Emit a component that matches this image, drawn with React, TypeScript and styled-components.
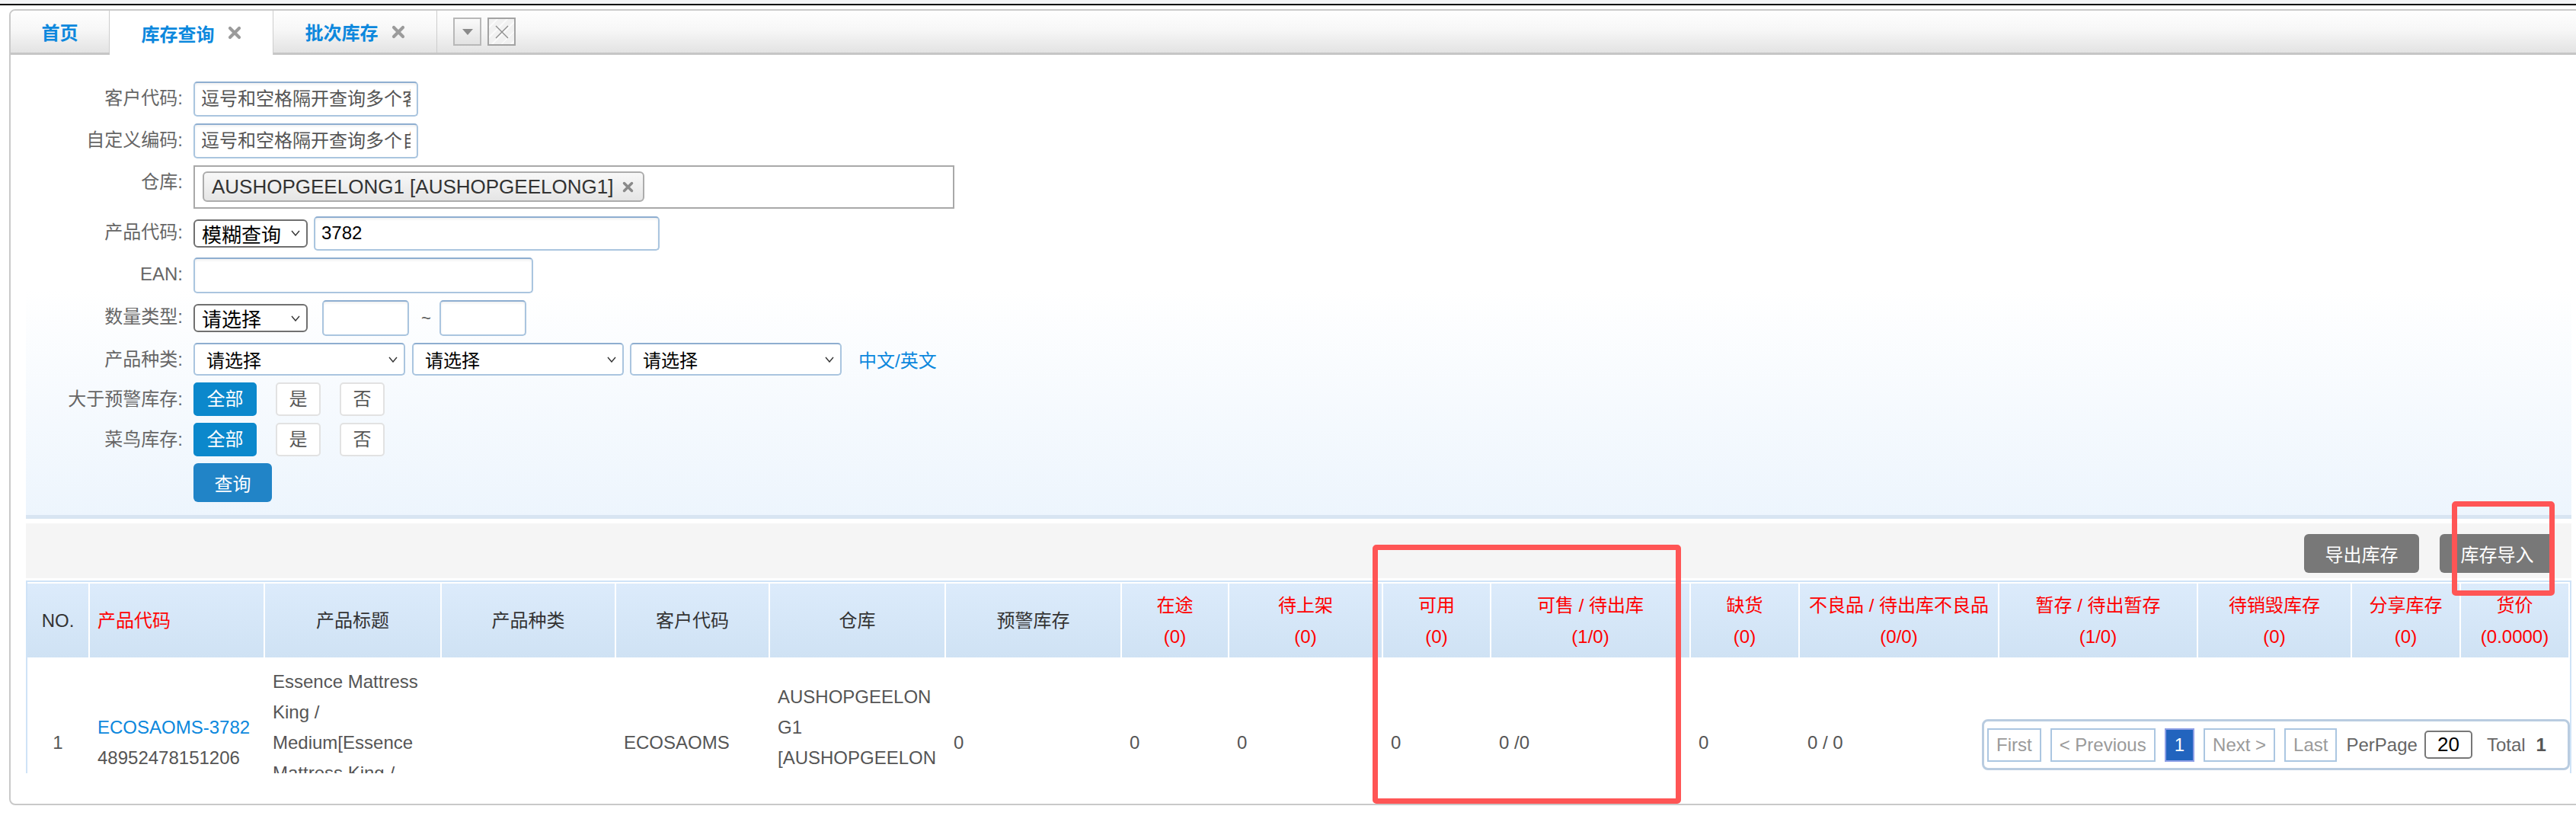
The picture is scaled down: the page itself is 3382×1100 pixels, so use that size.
import React from "react";
import styled, { createGlobalStyle, css } from "styled-components";

const FONT = `"Liberation Sans", Arial, "Noto Sans CJK SC", sans-serif`;

const Global = createGlobalStyle`
  html, body { margin: 0; padding: 0; background: #fff; overflow: hidden; }
  body { font-family: ${FONT}; font-size: 24px; color: #555; }
  * { box-sizing: border-box; }
`;

const Root = styled.div`
  position: relative;
  width: 3382px;
  height: 1100px;
  overflow: hidden;
  background: #fff;
`;

const TopStrip = styled.div`
  height: 7px;
  background: #f3f4f6;
  border-bottom: 2px solid #000;
`;

const Panel = styled.div`
  margin: 5px 0 0 12px;
  width: 3386px;
  height: 1045px;
  border: 2px solid #c9c9c9;
  border-radius: 8px;
  overflow: hidden;
  background: #fff;
`;

const TabBar = styled.div`
  display: flex;
  align-items: stretch;
  height: 58px;
  border-bottom: 3px solid #c6c6c6;
  background: linear-gradient(#fefefe 0%, #f7f7f7 45%, #e3e3e3 100%);
`;

const Tab = styled.div<{ $w: number; $active?: boolean }>`
  position: relative;
  display: flex;
  align-items: center;
  justify-content: center;
  gap: 17px;
  width: ${(p) => p.$w}px;
  border-right: 1px solid #cdcdcd;
  font-size: 24px;
  font-weight: bold;
  color: #0c88dd;
  ${(p) =>
    p.$active &&
    css`
      background: #fff;
      margin-bottom: -3px;
    `}
`;

const TabTools = styled.div`
  display: flex;
  align-items: center;
  gap: 8px;
  margin-left: 21px;
`;

const ToolButton = styled.div<{ $striped?: boolean }>`
  width: 37px;
  height: 37px;
  display: flex;
  align-items: center;
  justify-content: center;
  border: 2px solid #b8b8b8;
  background: ${(p) =>
    p.$striped
      ? "repeating-linear-gradient(135deg, #f1f1f1 0 7px, #fafafa 7px 9px)"
      : "linear-gradient(#fafafa, #e2e2e2)"};
  ${(p) => p.$striped && "border-color: #a3a3a3;"}
`;

const Content = styled.div`
  padding: 14px 20px 0;
`;

const SearchPanel = styled.div`
  display: flex;
  flex-direction: column;
  gap: 9px;
  padding: 21px 0 17px;
  background: linear-gradient(#ffffff 0%, #ffffff 50%, #edf5fd 100%);
  border-bottom: 5px solid #d8e5f2;
`;

const FormRow = styled.div<{ $h: number }>`
  display: flex;
  align-items: flex-start;
  height: ${(p) => p.$h}px;
`;

const Label = styled.div`
  width: 206px;
  margin-right: 14px;
  flex: none;
  height: 44px;
  line-height: 44px;
  text-align: right;
  font-size: 24px;
  color: #666;
  white-space: nowrap;
`;

const Fields = styled.div`
  display: flex;
  align-items: center;
  height: 100%;
`;

const TextInput = styled.input<{ $w: number; $h: number; $ml?: number }>`
  width: ${(p) => p.$w}px;
  height: ${(p) => p.$h}px;
  margin-left: ${(p) => p.$ml ?? 0}px;
  border: 2px solid #aac5df;
  border-top-color: #8eaed0;
  border-radius: 5px;
  box-shadow: inset 0 2px 3px rgba(0, 0, 0, 0.06);
  padding: 0 8px;
  font: 24px ${FONT};
  color: #000;
  background: #fff;
  outline: none;
  &::placeholder {
    color: #555;
    opacity: 1;
  }
`;

const SelectBox = styled.div<{ $w: number; $h: number; $styled?: boolean; $ml?: number }>`
  display: flex;
  align-items: center;
  justify-content: space-between;
  width: ${(p) => p.$w}px;
  height: ${(p) => p.$h}px;
  margin-left: ${(p) => p.$ml ?? 0}px;
  background: #fff;
  color: #000;
  ${(p) =>
    p.$styled
      ? css`
          border: 2px solid #aac5df;
          border-top-color: #8eaed0;
          border-radius: 5px;
          padding: 0 8px 0 15px;
          font-size: 24px;
        `
      : css`
          border: 2px solid #707070;
          border-radius: 6px;
          padding: 0 8px 0 9px;
          font-size: 26px;
        `}
`;

const Tilde = styled.span`
  margin: 0 11px 0 16px;
  font-size: 22px;
  color: #555;
`;

const LinkText = styled.a`
  margin-left: 22px;
  font-size: 24px;
  color: #0c88dd;
  text-decoration: none;
`;

const TagBox = styled.div<{ $w: number; $h: number }>`
  width: ${(p) => p.$w}px;
  height: ${(p) => p.$h}px;
  border: 2px solid #a9a9a9;
  padding: 6px 10px;
  background: #fff;
`;

const Tag = styled.span`
  display: inline-flex;
  align-items: center;
  gap: 12px;
  height: 40px;
  padding: 0 12px 0 10px;
  border: 2px solid #acacac;
  border-radius: 6px;
  background: linear-gradient(#f8f8f8, #e5e5e5);
  font-size: 26px;
  color: #333;
  white-space: nowrap;
`;

const ToggleGroup = styled.div`
  display: flex;
  gap: 25px;
`;

const Toggle = styled.div<{ $active?: boolean; $w: number }>`
  width: ${(p) => p.$w}px;
  height: 44px;
  line-height: 40px;
  text-align: center;
  font-size: 24px;
  border-radius: 5px;
  border: 2px solid ${(p) => (p.$active ? "#0b88cc" : "#e2e2e2")};
  background: ${(p) => (p.$active ? "#0b88cc" : "#fff")};
  color: ${(p) => (p.$active ? "#fff" : "#555")};
`;

const QueryButton = styled.button`
  width: 103px;
  height: 51px;
  border: none;
  border-radius: 6px;
  background: #2184c7;
  color: #fff;
  font: 24px ${FONT};
  padding: 0;
`;

const Toolbar = styled.div`
  display: flex;
  justify-content: flex-end;
  align-items: flex-start;
  gap: 27px;
  height: 72px;
  margin-top: 6px;
  padding: 14px 22px 0 0;
  background: #f5f5f5;
`;

const GrayButton = styled.button`
  width: 151px;
  height: 51px;
  border: none;
  border-radius: 6px;
  background: #787878;
  color: #fff;
  font: 24px ${FONT};
  padding: 0;
`;

const TableWrap = styled.div`
  position: relative;
  margin-top: 3px;
  height: 253px;
  border: 2px solid #cfe3f7;
  border-bottom: none;
  overflow: hidden;
`;

const Table = styled.table`
  width: 3336px;
  table-layout: fixed;
  border-collapse: separate;
  border-spacing: 0;
`;

const Th = styled.th<{ $w: number; $red?: boolean; $left?: boolean; $first?: boolean }>`
  width: ${(p) => p.$w}px;
  height: 99px;
  padding: 0 ${(p) => (p.$left ? "0 0 10px" : "4px")};
  border-top: 2px solid #fff;
  border-left: ${(p) => (p.$first ? "none" : "2px solid #fff")};
  background: linear-gradient(#dcebfb, #cfe2f4);
  font-size: 24px;
  font-weight: normal;
  line-height: 41px;
  white-space: nowrap;
  text-align: ${(p) => (p.$left ? "left" : "center")};
  color: ${(p) => (p.$red ? "#ff0000" : "#333")};
  vertical-align: middle;
`;

const Td = styled.td<{ $center?: boolean; $first?: boolean }>`
  padding: 12px 10px;
  border-left: ${(p) => (p.$first ? "none" : "2px solid transparent")};
  line-height: 40px;
  font-size: 24px;
  color: #555;
  vertical-align: middle;
  text-align: ${(p) => (p.$center ? "center" : "left")};
  overflow-wrap: break-word;
  word-wrap: break-word;
`;

const CodeLink = styled.a`
  display: block;
  color: #0c88dd;
  text-decoration: none;
`;

const Pager = styled.div`
  position: absolute;
  right: 0;
  bottom: 4px;
  display: flex;
  align-items: center;
  gap: 12px;
  width: 772px;
  height: 67px;
  padding: 0 4px;
  border: 3px solid #b9cce0;
  border-radius: 8px;
  background: #fff;
`;

const PageBtn = styled.span<{ $active?: boolean }>`
  height: 44px;
  line-height: 40px;
  padding: 0 ${(p) => (p.$active ? "11px" : "10px")};
  border: 2px solid ${(p) => (p.$active ? "#8d9fe6" : "#abc6e1")};
  background: ${(p) => (p.$active ? "#2264be" : "#fff")};
  color: ${(p) => (p.$active ? "#fff" : "#9a9a9a")};
  font-size: 24px;
  white-space: nowrap;
`;

const PagerText = styled.span<{ $ml?: number }>`
  margin-left: ${(p) => p.$ml ?? 0}px;
  font-size: 24px;
  color: #666;
  white-space: nowrap;
`;

const PerPageInput = styled.input`
  width: 63px;
  height: 37px;
  margin-left: -3px;
  border: 2px solid #777;
  border-radius: 5px;
  text-align: center;
  font: 26px ${FONT};
  color: #000;
  padding: 0;
  outline: none;
`;

const TotalNum = styled.b`
  margin-left: 14px;
  color: #555;
`;

const Annotation = styled.div<{ $x: number; $y: number; $w: number; $h: number }>`
  position: absolute;
  left: ${(p) => p.$x}px;
  top: ${(p) => p.$y}px;
  width: ${(p) => p.$w}px;
  height: ${(p) => p.$h}px;
  border: 7px solid #ff5555;
  border-radius: 5px;
  pointer-events: none;
`;

const CloseMark = ({ size = 18, color = "#9b9b9b" }: { size?: number; color?: string }) => (
  <svg width={size} height={size} viewBox="0 0 18 18">
    <path d="M3 3 L15 15 M15 3 L3 15" stroke={color} strokeWidth="4.2" strokeLinecap="round" />
  </svg>
);

const Chevron = () => (
  <svg width="12" height="8" viewBox="0 0 12 8">
    <polyline points="1,1 6,7 11,1" fill="none" stroke="#333" strokeWidth="1.4" />
  </svg>
);

const columns: { w: number; label: string; sub?: string; red?: boolean; left?: boolean }[] = [
  { w: 80, label: "NO." },
  { w: 230, label: "产品代码", red: true, left: true },
  { w: 232, label: "产品标题" },
  { w: 229, label: "产品种类" },
  { w: 202, label: "客户代码" },
  { w: 231, label: "仓库" },
  { w: 231, label: "预警库存" },
  { w: 141, label: "在途", sub: "(0)", red: true },
  { w: 202, label: "待上架", sub: "(0)", red: true },
  { w: 142, label: "可用", sub: "(0)", red: true },
  { w: 262, label: "可售 / 待出库", sub: "(1/0)", red: true },
  { w: 143, label: "缺货", sub: "(0)", red: true },
  { w: 262, label: "不良品 / 待出库不良品", sub: "(0/0)", red: true },
  { w: 261, label: "暂存 / 待出暂存", sub: "(1/0)", red: true },
  { w: 202, label: "待销毁库存", sub: "(0)", red: true },
  { w: 143, label: "分享库存", sub: "(0)", red: true },
  { w: 143, label: "货价", sub: "(0.0000)", red: true },
];

/* values of the stock columns; the last four lie under the pager and are left blank */
const rowValues = ["0", "0", "0", "0", "0 /0", "0", "0 / 0", "", "", "", ""];

export default function App() {
  return (
    <Root>
      <Global />
      <TopStrip />
      <Panel>
        <TabBar>
          <Tab $w={130}>首页</Tab>
          <Tab $w={215} $active>
            库存查询
            <CloseMark />
          </Tab>
          <Tab $w={215}>
            批次库存
            <CloseMark />
          </Tab>
          <TabTools>
            <ToolButton>
              <svg width="14" height="8" viewBox="0 0 14 8">
                <polygon points="0,0 14,0 7,8" fill="#8a8a8a" />
              </svg>
            </ToolButton>
            <ToolButton $striped>
              <svg width="20" height="20" viewBox="0 0 20 20">
                <path d="M2 2 L18 18 M18 2 L2 18" stroke="#8c8c8c" strokeWidth="1.3" />
              </svg>
            </ToolButton>
          </TabTools>
        </TabBar>

        <Content>
          <SearchPanel>
            <FormRow $h={46}>
              <Label>客户代码:</Label>
              <Fields>
                <TextInput $w={295} $h={46} placeholder="逗号和空格隔开查询多个客户代码" />
              </Fields>
            </FormRow>
            <FormRow $h={46}>
              <Label>自定义编码:</Label>
              <Fields>
                <TextInput $w={295} $h={46} placeholder="逗号和空格隔开查询多个自定义编码" />
              </Fields>
            </FormRow>
            <FormRow $h={57}>
              <Label>仓库:</Label>
              <TagBox $w={999} $h={57}>
                <Tag>
                  AUSHOPGEELONG1 [AUSHOPGEELONG1]
                  <CloseMark size={15} color="#8a8a8a" />
                </Tag>
              </TagBox>
            </FormRow>
            <FormRow $h={46}>
              <Label>产品代码:</Label>
              <Fields>
                <SelectBox $w={150} $h={37}>
                  模糊查询
                  <Chevron />
                </SelectBox>
                <TextInput $w={454} $h={45} $ml={8} defaultValue="3782" />
              </Fields>
            </FormRow>
            <FormRow $h={47}>
              <Label>EAN:</Label>
              <Fields>
                <TextInput $w={446} $h={47} />
              </Fields>
            </FormRow>
            <FormRow $h={47}>
              <Label>数量类型:</Label>
              <Fields>
                <SelectBox $w={150} $h={37}>
                  请选择
                  <Chevron />
                </SelectBox>
                <TextInput $w={114} $h={47} $ml={19} />
                <Tilde>~</Tilde>
                <TextInput $w={114} $h={47} />
              </Fields>
            </FormRow>
            <FormRow $h={43}>
              <Label>产品种类:</Label>
              <Fields>
                <SelectBox $styled $w={278} $h={43}>
                  请选择
                  <Chevron />
                </SelectBox>
                <SelectBox $styled $w={278} $h={43} $ml={9}>
                  请选择
                  <Chevron />
                </SelectBox>
                <SelectBox $styled $w={278} $h={43} $ml={8}>
                  请选择
                  <Chevron />
                </SelectBox>
                <LinkText>中文/英文</LinkText>
              </Fields>
            </FormRow>
            <FormRow $h={44}>
              <Label>大于预警库存:</Label>
              <ToggleGroup>
                <Toggle $active $w={83}>全部</Toggle>
                <Toggle $w={59}>是</Toggle>
                <Toggle $w={59}>否</Toggle>
              </ToggleGroup>
            </FormRow>
            <FormRow $h={44}>
              <Label>菜鸟库存:</Label>
              <ToggleGroup>
                <Toggle $active $w={83}>全部</Toggle>
                <Toggle $w={59}>是</Toggle>
                <Toggle $w={59}>否</Toggle>
              </ToggleGroup>
            </FormRow>
            <FormRow $h={51}>
              <Label />
              <QueryButton>查询</QueryButton>
            </FormRow>
          </SearchPanel>

          <Toolbar>
            <GrayButton>导出库存</GrayButton>
            <GrayButton>库存导入</GrayButton>
          </Toolbar>

          <TableWrap>
            <Table>
              <thead>
                <tr>
                  {columns.map((c, i) => (
                    <Th key={i} $w={c.w} $red={c.red} $left={c.left} $first={i === 0}>
                      {c.label}
                      {c.sub && <div>{c.sub}</div>}
                    </Th>
                  ))}
                </tr>
              </thead>
              <tbody>
                <tr>
                  <Td $first $center>1</Td>
                  <Td>
                    <CodeLink>ECOSAOMS-3782</CodeLink>
                    48952478151206
                  </Td>
                  <Td>Essence Mattress King / Medium[Essence Mattress King / Medium]</Td>
                  <Td />
                  <Td>ECOSAOMS</Td>
                  <Td>AUSHOPGEELONG1 [AUSHOPGEELONG1]</Td>
                  {rowValues.map((v, i) => (
                    <Td key={i}>{v}</Td>
                  ))}
                </tr>
              </tbody>
            </Table>
            <Pager>
              <PageBtn>First</PageBtn>
              <PageBtn>&lt; Previous</PageBtn>
              <PageBtn $active>1</PageBtn>
              <PageBtn>Next &gt;</PageBtn>
              <PageBtn>Last</PageBtn>
              <PagerText>PerPage</PagerText>
              <PerPageInput defaultValue="20" />
              <PagerText $ml={7}>
                Total<TotalNum>1</TotalNum>
              </PagerText>
            </Pager>
          </TableWrap>
        </Content>
      </Panel>
      <Annotation $x={1802} $y={715} $w={405} $h={340} />
      <Annotation $x={3219} $y={658} $w={135} $h={124} />
    </Root>
  );
}
